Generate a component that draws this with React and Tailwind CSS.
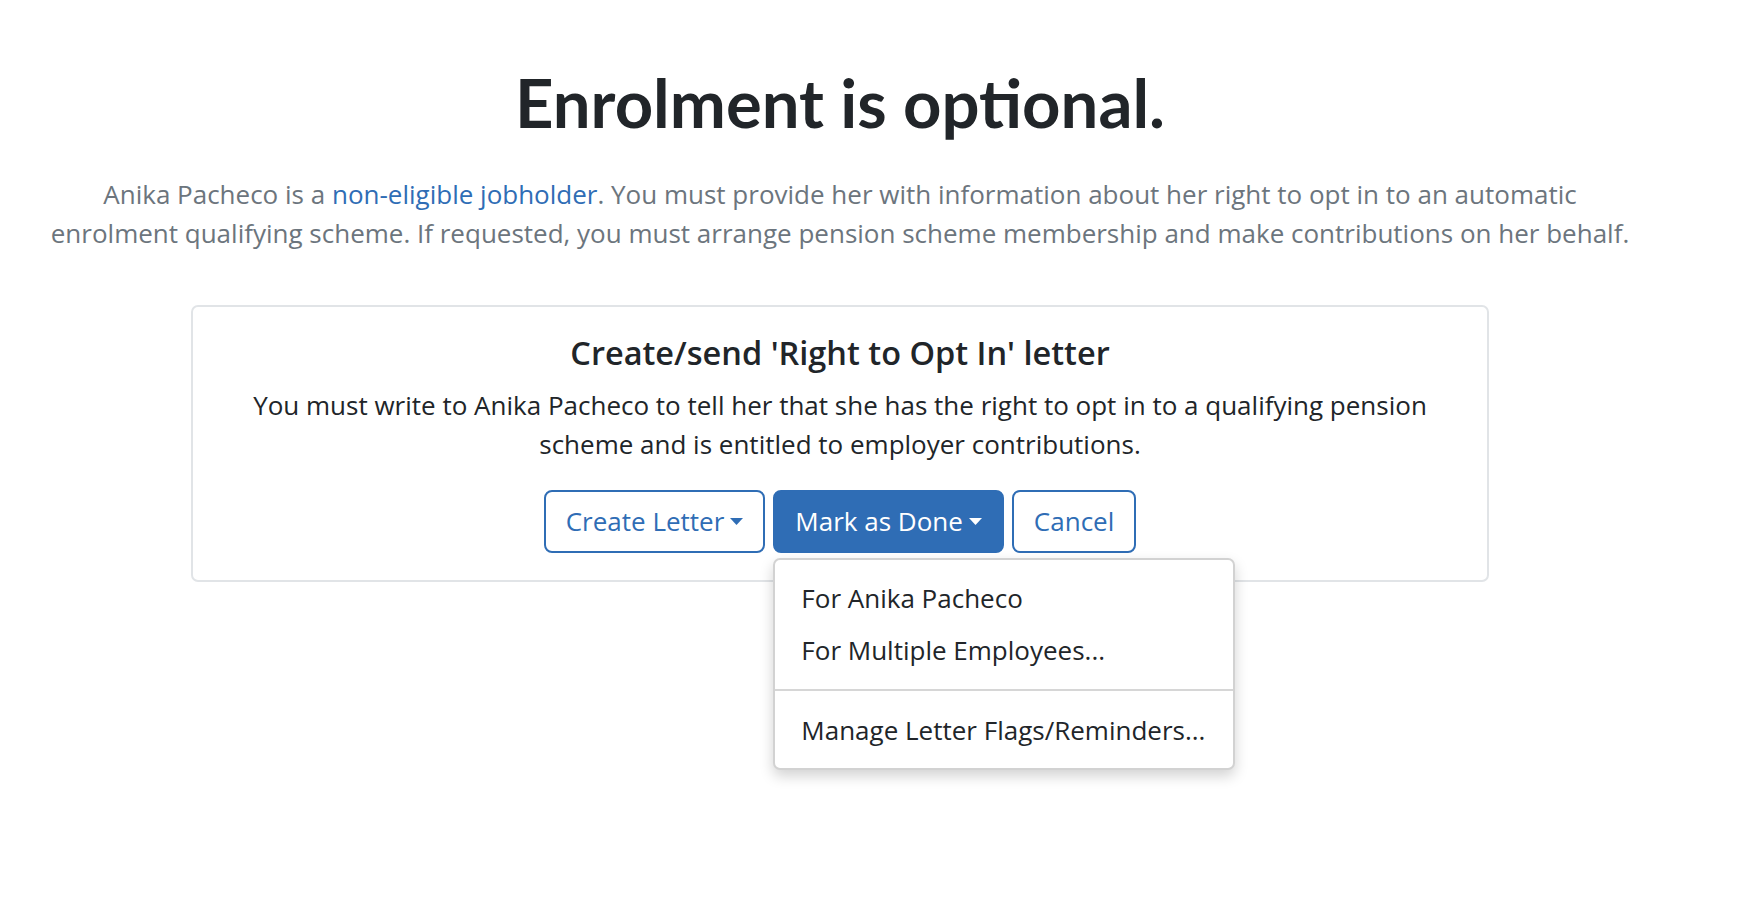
import { useState } from 'react'

// small down-pointing caret used on the dropdown toggles
function Caret() {
  return (
    <svg width="13" height="7" viewBox="0 0 13 7" className="ml-[6px] inline-block">
      <polygon points="0,0 13,0 6.5,7" fill="currentColor" />
    </svg>
  )
}

function App() {
  const [menuOpen, setMenuOpen] = useState(true)

  return (
    <div className="min-h-[898px] bg-white font-['Open_Sans',sans-serif]">
      <div className="w-[1680px] text-center">
        <h1 className="pt-[62px] font-['Lato',sans-serif] text-[67px] font-bold leading-[1.2] text-[#212529]">
          Enrolment is optional.
        </h1>

        <p className="mx-auto mt-[33px] w-[1596px] text-[26px] leading-[39px] text-[#6c757d]">
          Anika Pacheco is a{' '}
          <a href="#" className="text-[#2f6db5]">
            non-eligible jobholder
          </a>
          . You must provide her with information about her right to opt in to an automatic
          enrolment qualifying scheme. If requested, you must arrange pension scheme membership
          and make contributions on her behalf.
        </p>

        <div className="mx-auto mt-[52px] w-[1298px] rounded-[7px] border-2 border-[#e1e4e7] px-[40px] pb-[27px] pt-[26px]">
          <h5 className="text-[32.5px] font-semibold leading-[39px] text-[#212529]">
            Create/send 'Right to Opt In' letter
          </h5>
          <p className="mt-[14px] text-[26px] leading-[39px] text-[#212529]">
            You must write to Anika Pacheco to tell her that she has the right to opt in to a
            qualifying pension scheme and is entitled to employer contributions.
          </p>

          <div className="mt-[26px] flex justify-center gap-2">
            <button className="flex items-center rounded-[8px] border-2 border-[#2f6db5] bg-white px-[20px] py-[10px] text-[26px] leading-[39px] text-[#2f6db5]">
              Create Letter
              <Caret />
            </button>

            <div className="relative">
              <button
                onClick={() => setMenuOpen(!menuOpen)}
                className="flex items-center rounded-[8px] border-2 border-[#2f6db5] bg-[#2f6db5] px-[20px] py-[10px] text-[26px] leading-[39px] text-white"
              >
                Mark as Done
                <Caret />
              </button>

              {menuOpen && (
                <div className="absolute left-0 top-[calc(100%+5px)] z-10 w-[462px] rounded-[7px] border-2 border-[#d2d2d2] bg-white py-[12px] text-left shadow-[0_6px_14px_rgba(0,0,0,0.18)]">
                  <a href="#" className="block whitespace-nowrap px-[26px] py-[6.5px] text-[26px] leading-[39px] text-[#212529]">
                    For Anika Pacheco
                  </a>
                  <a href="#" className="block whitespace-nowrap px-[26px] py-[6.5px] text-[26px] leading-[39px] text-[#212529]">
                    For Multiple Employees...
                  </a>
                  <div className="my-[13px] h-[2px] bg-[#d6d6d6]" />
                  <a href="#" className="block whitespace-nowrap px-[26px] py-[6.5px] text-[26px] leading-[39px] text-[#212529]">
                    Manage Letter Flags/Reminders...
                  </a>
                </div>
              )}
            </div>

            <button className="rounded-[8px] border-2 border-[#2f6db5] bg-white px-[20px] py-[10px] text-[26px] leading-[39px] text-[#2f6db5]">
              Cancel
            </button>
          </div>
        </div>
      </div>
    </div>
  )
}

export default App
